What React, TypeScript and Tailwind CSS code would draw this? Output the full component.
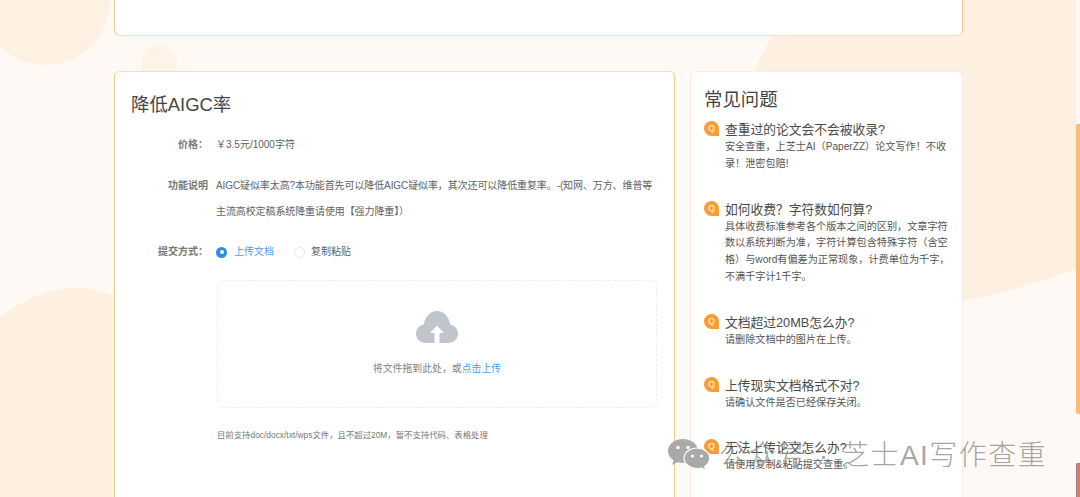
const faqs = [
  {
    q: "查重过的论文会不会被收录?",
    a: ["安全查重，上芝士AI（PaperZZ）论文写作！不收", "录！泄密包赔!"],
  },
  {
    q: "如何收费？字符数如何算?",
    a: [
      "具体收费标准参考各个版本之间的区别，文章字符",
      "数以系统判断为准，字符计算包含特殊字符（含空",
      "格）与word有偏差为正常现象，计费单位为千字，",
      "不满千字计1千字。",
    ],
  },
  { q: "文档超过20MB怎么办?", a: ["请删除文档中的图片在上传。"] },
  { q: "上传现实文档格式不对?", a: ["请确认文件是否已经保存关闭。"] },
  { q: "无法上传论文怎么办?", a: ["请使用复制&粘贴提交查重。"] },
];

function Backdrop() {
  return (
    <svg className="absolute inset-0" width="1080" height="497" viewBox="0 0 1080 497">
      <circle cx="45" cy="0" r="65" fill="#fef1e2" />
      <circle cx="159" cy="63" r="18" fill="#fef3e6" />
      <path d="M0 318 Q36 288 75 288 Q96 288 116 297 L200 340 L200 497 L0 497 Z" fill="#fef0e0" />
      <path d="M790 0 L754 71 L740 110 Q760 220 860 290 Q900 308 963 301 Q1020 290 1076 269 L1076 0 Z" fill="#fef0e0" />
    </svg>
  );
}

function QIcon() {
  return (
    <div className="flex h-[15px] w-[15px] shrink-0 items-center justify-center rounded-full rounded-br-[3px] bg-[#f99c33] text-[9px] leading-none font-bold text-[#fde6c8]">
      Q
    </div>
  );
}

function WeChatMark() {
  return (
    <svg width="42" height="32" viewBox="0 0 42 32">
      <path d="M15 0C6.7 0 0 5.4 0 12c0 3.8 2.2 7 5.6 9.300L4 26l5.400-2.800c1.800.5 3.700.8 5.600.8 8.300 0 15-5.400 15-12S23.300 0 15 0Z" fill="#a9a9a9" />
      <path d="M29 9c-7.200 0-13 4.600-13 10.300S21.800 29.600 29 29.600c1.500 0 3-.2 4.300-.6L38 31.600l-1.300-4.100c3-1.900 5-4.800 5-8.200C41.700 13.600 36.200 9 29 9Z" fill="#a9a9a9" stroke="#ffffff" strokeWidth="1.200" />
      <circle cx="10" cy="8.500" r="1.800" fill="#ffffff" />
      <circle cx="20" cy="8.500" r="1.800" fill="#ffffff" />
      <circle cx="24.500" cy="17" r="1.600" fill="#ffffff" />
      <circle cx="33.500" cy="17" r="1.600" fill="#ffffff" />
    </svg>
  );
}

function CloudUpload() {
  return (
    <svg width="42" height="32" viewBox="0 0 42 32">
      <path
        d="M10 32C4.500 32 0 28 0 22.800 0 18.200 3.300 14.400 7.800 13.600 8.800 5.900 14.300 0 21 0s12.200 5.900 13.200 13.600C38.700 14.400 42 18.200 42 22.800 42 28 37.500 32 32 32H23.500V22H28L21 14.500 14 22H18.500V32Z"
        fill="#c0c4cc"
      />
    </svg>
  );
}

export default function App() {
  return (
    <div
      className="relative h-[497px] w-[1080px] overflow-hidden bg-[#fef9f4] text-[10px] text-[#606266]"
      style={{ fontFamily: '"Liberation Sans", "Noto Sans CJK SC", sans-serif' }}
    >
      <Backdrop />

      <div className="relative w-[963px] pl-[114px]">
        <div className="h-[36px] rounded-b-[6px] border-x border-b border-x-[#f4c88a] border-b-[#fbdfb5] bg-white" />

        <div className="mt-[35px] flex items-start gap-[15px]">
          <div className="h-[460px] w-[561px] rounded-[6px] border border-[#f4c88a] border-t-[#fbdfb5] bg-white pt-[20px] pl-[16px]">
            <h2 className="text-[18.400px] leading-[26px] text-[#444]">降低AIGC率</h2>

            <div className="mt-[18px] flex leading-[18px]">
              <div className="w-[77px] text-right font-bold text-[#777]">价格：</div>
              <div className="ml-[8px]">￥3.5元/1000字符</div>
            </div>

            <div className="mt-[19px] flex leading-[26px]">
              <div className="w-[77px] text-right font-bold text-[#777]">功能说明</div>
              <div className="ml-[8px] tracking-[-0.100px] whitespace-nowrap">
                <div>AIGC疑似率太高?本功能首先可以降低AIGC疑似率，其次还可以降低重复率。-(知网、万方、维普等</div>
                <div>主流高校定稿系统降重请使用【强力降重】）</div>
              </div>
            </div>

            <div className="mt-[18px] flex items-center leading-[18px]">
              <div className="w-[77px] text-right font-bold text-[#777]">提交方式：</div>
              <div className="ml-[8px] flex items-center">
                <span className="flex h-[11px] w-[11px] items-center justify-center rounded-full bg-[#2d8cf0]">
                  <span className="h-[4px] w-[4px] rounded-full bg-white" />
                </span>
                <span className="ml-[7px] text-[#4a9fe8]">上传文档</span>
                <span className="ml-[20px] h-[11px] w-[11px] rounded-full border border-[#e6e8ec] bg-white" />
                <span className="ml-[6px]">复制粘贴</span>
              </div>
            </div>

            <div className="mt-[19px] ml-[86px] flex h-[128px] w-[440px] flex-col items-center rounded-[6px] border border-dashed border-[#eeeef0] pt-[30px]">
              <CloudUpload />
              <div className="mt-[17px] text-[9.900px] leading-[18px] text-[#808388]">
                将文件拖到此处，或<span className="text-[#4a9fe8]">点击上传</span>
              </div>
            </div>

            <div className="mt-[20px] ml-[86px] text-[8.400px] leading-[14px] text-[#777]">
              目前支持doc/docx/txt/wps文件，且不超过20M，暂不支持代码、表格处理
            </div>
          </div>

          <div className="h-[460px] w-[273px] rounded-[6px] border border-[#f2eeea] bg-white pt-[14px] pl-[13px]">
            <h2 className="text-[18.400px] leading-[28px] text-[#444]">常见问题</h2>
            <div className="mt-[7px] flex flex-col gap-[28px]">
              {faqs.map((item) => (
                <div key={item.q} className="flex gap-[6px]">
                  <QIcon />
                  <div className="whitespace-nowrap">
                    <div className="text-[12.750px] leading-[18px] text-[#4a4a4a]">{item.q}</div>
                    {item.a.map((line) => (
                      <div key={line} className="text-[10.150px] leading-[16.800px] text-[#555]">
                        {line}
                      </div>
                    ))}
                  </div>
                </div>
              ))}
            </div>
          </div>
        </div>
      </div>

      {/* scrollbar */}
      <div className="absolute top-0 right-0 h-full w-[4px] bg-[#fef9f4]">
        <div className="mt-[124px] h-[290px] rounded-l-[2px] bg-[#fdbb78]" />
        <div className="mt-[49px] h-[40px] rounded-tl-[2px] border-t border-l border-[#888] bg-[#f0705a]" />
      </div>

      {/* watermark */}
      <div className="absolute top-[437px] left-[668px] flex items-center gap-[9px]">
        <WeChatMark />
        <span className="mt-[2px] text-[28px] leading-[34px] font-light tracking-[1.500px] whitespace-nowrap text-[#8e8e8e]/80">
          公众号<span className="mx-[2px]"> · </span>芝士AI写作查重
        </span>
      </div>
    </div>
  );
}
